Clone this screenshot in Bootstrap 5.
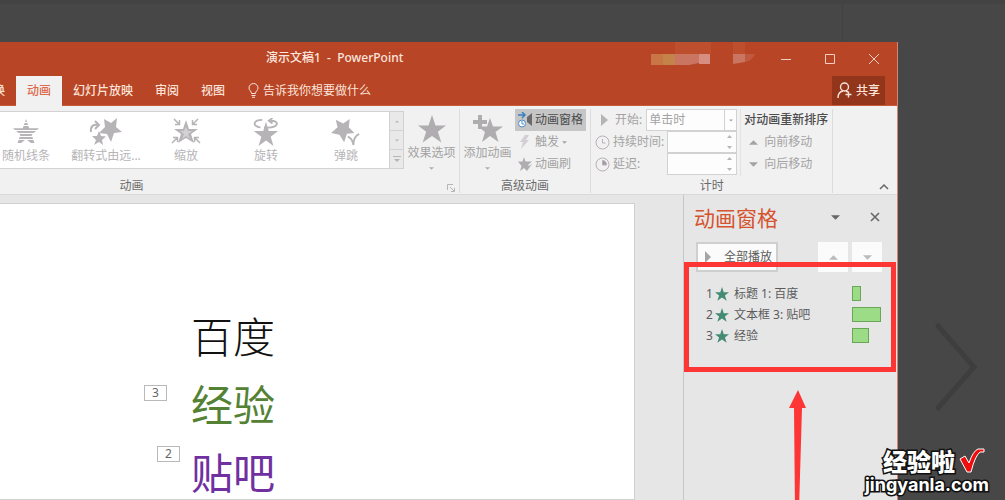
<!DOCTYPE html>
<html lang="zh-CN">
<head>
<meta charset="utf-8">
<meta name="viewport" content="width=device-width, initial-scale=1">
<title>演示文稿1 - PowerPoint</title>
<link href="https://cdn.jsdelivr.net/npm/bootstrap@5.3.0/dist/css/bootstrap.min.css" rel="stylesheet">
<style>
  body { background: #474747; font: 12px/20px "Noto Sans", "Noto Sans CJK SC", sans-serif; color: #5c5c5c; }
  button, input, select { font: inherit; color: inherit; border: 0; background: none; padding: 0; }
  svg { display: block; flex: none; }
  .backdrop { height: 42px; border-top: 4px solid #434343; }
  .backdrop div { width: 163px; border-left: 1px solid #414141; }
  .app { margin-right: 107px; background: #e6e6e6; border-right: 1px solid #d48672; min-height: 0; }
  .titlebar { height: 34px; background: #b84525; color: #fbe6df; padding-left: 266px; padding-right: 1px; font-weight: 500; }
  .titlebar > span { white-space: pre; line-height: 18px; margin-bottom: 2px; }
  .titlebar button { width: 44px; height: 32px; }
  .pixels { margin-right: 7px; }
  .tabs { height: 30px; background: #b84525; color: #fbe3da; border-bottom: 1px solid #c65a3b; font-weight: 500; }
  .tabs button { padding: 0 11px; height: 29px; }
  .tabs .cut { margin-left: -18px; }
  .tabs .on { background: #f1f1f1; color: #dc6b4c; height: 30px; }
  .tabs .share { background: #93351b; padding: 0 5px; margin-right: 12px; }
  .tabs .tell { padding-left: 12px; font-weight: 400; }
  .ribbon { background: #f1f1f1; height: 89px; border-bottom: 1px solid #d9d9d9; padding-top: 3px; color: #a3a3a3; }
  .group { border-right: 1px solid #dcdcdc; height: 84px; }
  .tools { height: 67px; }
  .caption { color: #6b6b6b; text-align: center; }
  .caption svg { color: #b5b5b5; }
  .gallery { height: 58px; margin-top: 2px; border: 1px solid #d2d2d2; border-left: 0; background: #fff; color: #b7b4b7; }
  .gallery .strip { width: 389px; overflow: hidden; }
  .gallery .strip button { width: 80px; flex: none; }
  .gallery .strip button:first-child { margin-left: -14px; }
  .gallery .strip svg { margin: 4px auto 0; }
  .scroller { width: 14px; background: #e9e9e9; }
  .scroller button { flex: 1; display: grid; place-items: center; border-left: 1px solid #d2d2d2; }
  .scroller button + button { border-top: 1px solid #d2d2d2; }
  .big { width: 55px; color: #a3a3a3; }
  .big svg { margin: 0 auto; color: #b0adb0; }
  .big .drop { margin-top: 4px; }
  .smallrow { height: 22px; gap: 3px; }
  .advanced .smallrow { padding: 0 3px; }
  .pressed { background: #c6c6c6; color: #4a4a4a; }
  .field { background: #fdfdfd; border: 1px solid #d2d2d2; height: 22px; }
  .field input { width: 54px; }
  .field select { appearance: none; flex: 1; padding: 0 2px; }
  .split { border-left: 1px solid #d2d2d2; width: 12px; height: 20px; display: grid; place-items: center; }
  .order { border-left: 1px solid #e2e2e2; margin-left: 3px; padding-left: 3px; }
  .order strong { font-weight: 500; color: #4d4d4d; line-height: 22px; }
  .order .smallrow { gap: 6px; padding-left: 5px; }
  .slide { background: #fff; border: 1px solid #d0d0d0; border-left: 0; margin-top: 8px; flex: 1; margin-right: 48px; padding: 97px 0 0 191px; overflow: hidden; }
  .slide p { font: 400 42px/68px "Noto Sans CJK SC", sans-serif; margin: 0; position: relative; }
  .slide .thin { font-weight: 300; }
  .tag { position: absolute; right: 100%; width: 23px; height: 16px; border: 1px solid #b9b9b9; font: 12px/14px "Noto Sans", sans-serif; text-align: center; color: #666; background: #fff; }
  .tag-a { margin: 16px 24px 0 0; }
  .tag-b { margin: 9px 11px 0 0; }
  .pane { width: 214px; border-left: 1px solid #c6c6c6; position: relative; }
  .pane h1 { font: 400 21px/28px "Noto Sans CJK SC", sans-serif; color: #d6532f; margin: 0; width: 126px; }
  .panehead { padding: 8px 7px 0 10px; }
  .panehead button { width: 30px; height: 20px; display: grid; place-items: center; }
  .panebar { padding: 11px 15px 0 12px; }
  .panebar button { background: #fbfbfb; height: 30px; }
  .panebar .play { width: 82px; border: 2px solid #cfcfcf; padding-left: 6px; }
  .panebar .step { width: 30px; display: grid; place-items: center; }
  .effects { padding: 11px 0 0 22px; margin: 0; }
  .effects li { display: flex; align-items: center; height: 21px; }
  .effects li span { width: 118px; margin-left: 5px; }
  .effects .num { width: 9px; margin: 0; }
  .effects i { background: #9ddc87; border: 1px solid #6aa657; height: 15px; }
  .callout { position: absolute; top: 67px; left: 0; right: 1px; height: 110px; border: 5px solid #fd3535; }
  .pointer { position: absolute; top: 195px; left: 105px; }
  .next { position: absolute; right: 26px; top: 321px; }
  .mark-site { position: absolute; right: 16px; bottom: 4px; color: #fff; text-align: right; }
  .mark-site b { -webkit-text-stroke: 3px #111; paint-order: stroke fill; display: block; }
  .mark-cn { font: 900 24px/26px "Noto Sans CJK SC", sans-serif; }
  .mark-en { font: 700 18px/22px Inter, sans-serif; }
</style>
</head>
<body class="vh-100 overflow-hidden d-flex flex-column position-relative">
<svg width="0" height="0" class="position-absolute">
  <symbol id="star" viewBox="0 0 24 24"><path fill="currentColor" d="M12 0l3 9h9l-7 5.400 3 9.100-8-5.500-8 5.500 3-9.100L0 9h9z"/></symbol>
  <symbol id="down" viewBox="0 0 10 5"><path fill="currentColor" d="M0 0h10L5 5z"/></symbol>
  <symbol id="up" viewBox="0 0 10 5"><path fill="currentColor" d="M0 5h10L5 0z"/></symbol>
</svg>

<div class="backdrop d-flex justify-content-end flex-shrink-0"><div></div></div>

<div class="app d-flex flex-column flex-grow-1">
  <header class="titlebar d-flex align-items-center flex-shrink-0">
    <span class="me-auto">演示文稿1  -  PowerPoint</span>
    <svg class="pixels align-self-start" width="106" height="24"><path fill="#bd4f2f" d="M24 0h36v12H24zM82 0h12v12H82z"/><path fill="#c97647" d="M0 12h12v11H0z"/><path fill="#c48449" d="M12 12h12v11H12z"/><path fill="#ca7462" d="M24 12h24v9l-10 2H24zM82 12h12v8l-12 2z"/><path fill="#d58e80" d="M48 12h11v10H48z"/><path fill="#bf593f" d="M94 12h10q-3 7-10 8z"/></svg>
    <button aria-label="最小化"><svg class="mx-auto" width="10" height="10"><path d="M0 5.500h10" stroke="#f3cfc3"/></svg></button>
    <button aria-label="最大化"><svg class="mx-auto" width="10" height="10"><path d="M.5.5h9v9h-9z" fill="none" stroke="#f3cfc3"/></svg></button>
    <button aria-label="关闭"><svg class="mx-auto" width="10" height="10"><path d="M0 0l10 10M10 0L0 10" stroke="#f3cfc3"/></svg></button>
  </header>

  <nav class="tabs d-flex flex-shrink-0">
    <button class="cut">换</button>
    <button class="on">动画</button>
    <button>幻灯片放映</button>
    <button>审阅</button>
    <button>视图</button>
    <button class="tell d-flex align-items-center gap-1"><svg width="11" height="15" viewBox="0 0 11 15" fill="none" stroke="currentColor"><path d="M3.500 10.500C3.500 8 1 7.500 1 5a4.500 4.500 0 0 1 9 0c0 2.500-2.500 3-2.500 5.500zM3.500 12.500h4M4 14.300h3"/></svg>告诉我你想要做什么</button>
    <button class="share ms-auto d-flex align-items-center gap-1"><svg width="15" height="17" viewBox="0 0 15 17" fill="none" stroke="currentColor" stroke-width="1.400"><circle cx="7.500" cy="5" r="4"/><path d="M1 16c0-4 2-6.500 5-7M9 9l2 1M11.500 9.500v6M8.500 12.500h6"/></svg>共享</button>
  </nav>

  <section class="ribbon d-flex flex-shrink-0">
    <div class="group">
      <div class="tools d-flex">
        <div class="gallery d-flex">
          <div class="strip d-flex">
            <button><svg width="28" height="28" viewBox="0 0 28 28"><path fill="currentColor" d="M14 1l1 3h-2zM12.600 5h2.800l.7 2h-4.200zM11.500 8h5l.7 2.300H27L25 12H3l-2-1.700h9.800zM4 13h20l-2.500 2h-15zM7.500 16h13l-1 2H8.500zM7.500 19h13l.5 2H7zM6.700 22H13l-4 3H5.500zM15 22h6.300l1.200 3H19z"/></svg>随机线条</button>
            <button><svg width="34" height="28" viewBox="0 0 34 28"><g fill="currentColor"><path d="M28 0l-1 9 6 5-8 1-3 9-4-8-8-1 6-6-1-8 7 4zM10 13l2 5 5 .500-4 3.500 1 5-4-3-5 3 2-5-4-4h5z"/></g><path d="M2 14c-1-6 3-8 7-7M6 3l4 4-4 4" fill="none" stroke="currentColor" stroke-width="2"/></svg>翻转式由远...</button>
            <button><svg width="30" height="28" viewBox="0 0 30 28"><path fill="currentColor" d="M15 2l3 9h9l-7 5 3 9-8-5-8 5 3-9-7-5h9z"/><path fill="#d4d1d4" d="M15 9l2 4h4l-4 3 2 5-4-3-4 3 2-5-4-3h4z"/><path d="M3 1l5 5M4 6.500h4.500V2M27 1l-5 5M21.500 2v4.500H26M1 25l5-5M2 19.500h4.500V24M29 25l-5-5M28 19.500h-4.500V24" fill="none" stroke="currentColor" stroke-width="1.500"/></svg>缩放</button>
            <button><svg width="28" height="28" viewBox="0 0 28 30"><path fill="currentColor" d="M14 4l3 10h10l-8 6 3 10-8-6-8 6 3-10-8-6h10z"/><path d="M10 2C0 2-1 9 8 10M12 10c16 2 18-8 6-7M21 0l-4 3 4 3" fill="none" stroke="currentColor" stroke-width="2"/></svg>旋转</button>
            <button><svg width="32" height="28" viewBox="0 0 32 30"><path fill="currentColor" d="M5 2l8 4 7-5-1 9 6 6-8 1-3 9-5-8-9-2 7-6z"/><path d="M18 20c3 1 5 4 6 9 0-6 2-10 6-12" fill="none" stroke="currentColor" stroke-width="2"/></svg>弹跳</button>
          </div>
          <div class="scroller d-flex flex-column">
            <button aria-label="上一行"><svg width="4" height="3"><use href="#up"/></svg></button>
            <button aria-label="下一行"><svg width="4" height="3"><use href="#down"/></svg></button>
            <button aria-label="其他"><svg width="8" height="7" viewBox="0 0 8 7"><path d="M0 0h8v1H0zM1 3h6L4 6z" fill="currentColor"/></svg></button>
          </div>
        </div>
        <button class="big"><svg width="28" height="28"><use href="#star"/></svg>效果选项<svg class="drop" width="5" height="3"><use href="#down"/></svg></button>
      </div>
      <div class="caption position-relative" style="padding-right:196px">动画<svg class="position-absolute end-0 top-0 mt-2 me-1" width="8" height="8" fill="none" stroke="currentColor"><path d="M.5 6V.5H6M3 3l4 4M7.500 4v3.500H4"/></svg></div>
    </div>

    <div class="group advanced">
      <div class="tools d-flex">
        <button class="big"><svg width="32" height="28" viewBox="0 0 32 28"><path fill="currentColor" d="M18 3l3 8.500h10L23.500 17l3 10L18 21l-8 6 3-10-7-5.500h9zM6 0h4v5h5v4h-5v5H6V9H1V5h5z"/></svg>添加动画<svg class="drop" width="5" height="3"><use href="#down"/></svg></button>
        <div class="d-flex flex-column me-1">
          <button class="smallrow pressed d-flex align-items-center"><svg width="14" height="16" viewBox="0 0 14 16"><path d="M0 3h7M4 0l3 3-3 3" fill="none" stroke="#3a7fc4" stroke-width="1.500"/><circle cx="4" cy="11.500" r="3.500" fill="#fff" stroke="#4d8bc8"/><path d="M4 9v3h2" fill="none" stroke="#4d8bc8"/><path d="M14 1v13L9 10V5z" fill="#6a6a6a"/></svg>动画窗格</button>
          <button class="smallrow d-flex align-items-center"><svg width="14" height="14" viewBox="0 0 14 14"><path d="M7 0h4L8 5h3L3 14l2-7H2z" fill="#d3ced3"/></svg>触发<svg width="5" height="3"><use href="#down"/></svg></button>
          <button class="smallrow d-flex align-items-center"><svg width="14" height="14" viewBox="0 0 14 14"><path d="M6 0l1.500 4.500H14L10 8l1 1 3-2-5 7-3-3-4 3 1.500-5L0 4.500h4.500z" fill="#b0adb0"/></svg>动画刷</button>
        </div>
      </div>
      <div class="caption">高级动画</div>
    </div>

    <div class="group">
      <div class="tools d-flex px-1">
        <div>
          <div class="smallrow d-flex align-items-center ps-1"><svg width="13" height="12" viewBox="0 0 13 12"><path d="M2 0l7 6-7 6z" fill="#b7b4b7"/></svg><label class="me-auto" for="start">开始:</label>
            <div class="field d-flex" style="width:91px"><select id="start"><option>单击时</option></select><span class="split"><svg width="4" height="3"><use href="#down"/></svg></span></div></div>
          <div class="smallrow d-flex align-items-center"><svg width="15" height="15" viewBox="0 0 15 15" fill="none" stroke="#b9b0b9"><circle cx="7.500" cy="7.500" r="6.500"/><path d="M7.500 4v4h3"/></svg><label class="me-auto" for="dur">持续时间:</label>
            <div class="field d-flex" style="width:70px"><input id="dur"><svg class="m-auto" width="5" height="14" viewBox="0 0 5 14"><path d="M0 3h5L2.500 0zM0 11h5l-2.500 3z" fill="#b5b5b5"/></svg></div></div>
          <div class="smallrow d-flex align-items-center"><svg width="15" height="15" viewBox="0 0 15 15" fill="none" stroke="#b9b0b9"><circle cx="7.500" cy="7.500" r="6.500"/><path d="M7.500 3.500v4.500h4a4 4 0 0 0-4-4.500" fill="#a39ba3"/></svg><label class="me-auto" for="delay">延迟:</label>
            <div class="field d-flex" style="width:70px"><input id="delay"><svg class="m-auto" width="5" height="14" viewBox="0 0 5 14"><path d="M0 3h5L2.500 0zM0 11h5l-2.500 3z" fill="#b5b5b5"/></svg></div></div>
        </div>
        <div class="order">
          <strong class="d-block">对动画重新排序</strong>
          <button class="smallrow d-flex align-items-center"><svg width="9" height="5"><use href="#up"/></svg>向前移动</button>
          <button class="smallrow d-flex align-items-center"><svg width="9" height="5"><use href="#down"/></svg>向后移动</button>
        </div>
      </div>
      <div class="caption">计时</div>
    </div>
    <button class="ms-auto mt-auto me-2 mb-1" aria-label="折叠功能区"><svg width="10" height="7" viewBox="0 0 10 7"><path d="M1 6l4-4 4 4" fill="none" stroke="#666" stroke-width="1.500"/></svg></button>
  </section>

  <main class="d-flex flex-grow-1" style="min-height:0">
    <article class="slide">
      <p class="thin" style="color:#111">百度</p>
      <p style="color:#548235"><span class="tag tag-a">3</span>经验</p>
      <p style="color:#7030a0"><span class="tag tag-b">2</span>贴吧</p>
    </article>
    <aside class="pane flex-shrink-0">
      <div class="panehead d-flex align-items-center">
        <h1>动画窗格</h1>
        <button aria-label="选项"><svg width="9" height="5" color="#666"><use href="#down"/></svg></button>
        <button class="ms-auto" aria-label="关闭窗格"><svg width="10" height="10"><path d="M1 1l8 8M9 1L1 9" stroke="#666" stroke-width="1.600"/></svg></button>
      </div>
      <div class="panebar d-flex">
        <button class="play d-flex align-items-center"><svg width="8" height="12" class="me-2"><path d="M1 0l6 6-6 6z" fill="#a5a5a5"/></svg><span class="ms-1">全部播放</span></button>
        <button class="step ms-auto" aria-label="上移"><svg width="9" height="5" color="#bbb"><use href="#up"/></svg></button>
        <button class="step ms-1" aria-label="下移"><svg width="9" height="5" color="#bbb"><use href="#down"/></svg></button>
      </div>
      <ol class="effects list-unstyled">
        <li><span class="num">1</span><svg width="14" height="14" color="#448b74"><use href="#star"/></svg><span>标题 1: 百度</span><i style="width:9px"></i></li>
        <li><span class="num">2</span><svg width="14" height="14" color="#448b74"><use href="#star"/></svg><span>文本框 3: 贴吧</span><i style="width:29px"></i></li>
        <li><span class="num">3</span><svg width="14" height="14" color="#448b74"><use href="#star"/></svg><span>经验</span><i style="width:17px"></i></li>
      </ol>
      <div class="callout"></div>
      <svg class="pointer" width="18" height="120" viewBox="0 0 18 120"><path d="M9 0l8 18h-4L10 120H6L5 18H0z" fill="#fd3535"/></svg>
    </aside>
  </main>
</div>

<svg class="next" width="46" height="92" viewBox="0 0 46 92"><path d="M5 5l36 41L5 87" fill="none" stroke="#3e3e3e" stroke-width="5" stroke-linecap="round"/></svg>
<div class="mark-site">
  <div class="d-flex justify-content-end"><b class="mark-cn">经验啦</b><svg class="ms-1 me-1" width="26" height="25" viewBox="0 0 26 25"><path d="M1 11l5-3 4 7Q14 3 19 1h6v3h-4Q16 8 12 24H8z" fill="#f00d0d" stroke="#fff"/></svg></div>
  <b class="mark-en">jingyanla.com</b>
</div>
<script src="https://cdn.jsdelivr.net/npm/bootstrap@5.3.0/dist/js/bootstrap.bundle.min.js"></script>
</body>
</html>
